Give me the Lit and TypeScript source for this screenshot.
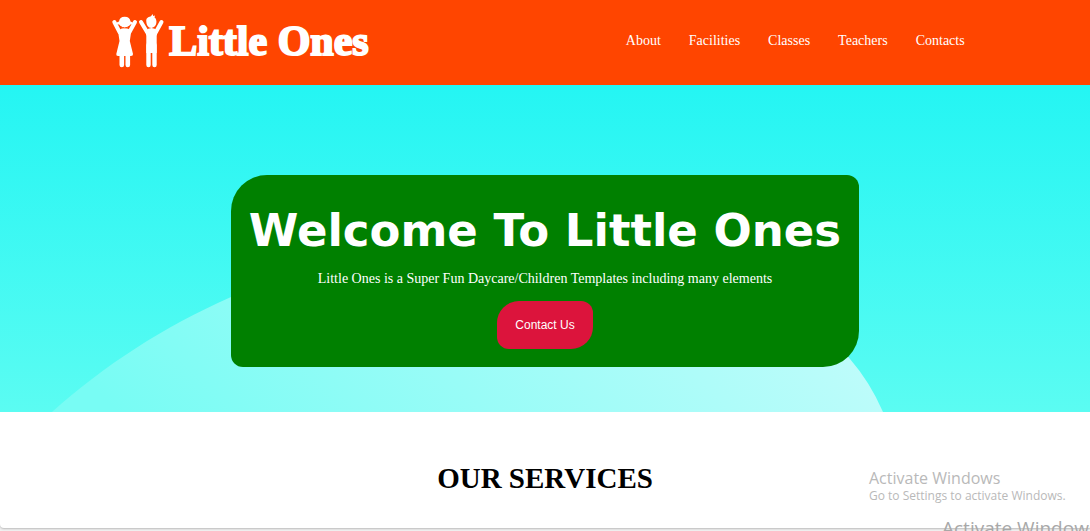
import { LitElement, html, css } from "lit";
import { customElement } from "lit/decorators.js";

const LINKS = ["About", "Facilities", "Classes", "Teachers", "Contacts"];

@customElement("site-logo")
class SiteLogo extends LitElement {
  static styles = css`
    :host { display: block; }
    .logo { display: flex; align-items: center; gap: 4px; color: #fff; text-decoration: none; }
    .kids { display: block; width: 54px; height: 54px; }
    .name {
      font: bold 42px/54px "Liberation Serif", serif;
      -webkit-text-stroke: 2px #fff;
      white-space: nowrap;
    }
  `;
  render() {
    return html`
      <a class="logo" href="#">
        <svg class="kids" viewBox="0 0 54 54" fill="none" stroke="#fff" stroke-linecap="round" stroke-linejoin="round" aria-hidden="true">
          <g stroke-width="4">
            <path d="M3.300 8L8.500 18M24 8L18.500 18" />
            <path d="M30 8L36 18M50.500 8L45 18" />
            <path d="M10.800 38V51M16.800 38V51" stroke-width="4.600" />
            <path d="M37.500 31V51M43.500 31V51" stroke-width="4.400" />
          </g>
          <g fill="#fff" stroke="none">
            <path d="M7 17Q10 14 13.500 14Q17.500 14 20.300 17L18.800 27L22 40Q22.200 42 20 42H7Q5 42 5.300 40L8.500 27Z" />
            <path d="M34.300 17Q37.300 14 40.500 14Q43.800 14 46.800 17L45.700 22V39H35.300V22Z" />
            <path d="M8 7.500Q8.500 3 13.700 2.800Q19 3 19.500 7.500L21.700 8.500Q22 11 19.300 10.500Q17 14 13.700 14Q10.500 14 8.200 10.500Q5.300 11 5.700 8.500Z" />
            <path d="M35.300 7.500C35 4 37 3 39.500 2.500L42 0L42 2L44 1.500L43.500 3.500C46.500 5 46.500 13 40.500 14C37 14 35.500 11 35.300 7.500Z" />
          </g>
          <path d="M9.500 12.500Q13.700 15.500 18 12.500" stroke="#ff4500" stroke-width="1" />
        </svg>
        <span class="name">Little Ones</span>
      </a>
    `;
  }
}

@customElement("site-hero")
class SiteHero extends LitElement {
  static styles = css`
    :host { display: block; }
    .hero { display: grid; background: linear-gradient(#24f5f3, #5bfcf2); }
    .hill, .content { grid-area: 1 / 1; }
    .hill { width: 100%; height: 100%; min-height: 0; contain: size; }
    .content { display: flex; justify-content: center; padding: 90px 16px 45px; z-index: 1; }
    .card {
      display: flex; flex-direction: column; align-items: center;
      padding: 28px 18px 18px;
      border-radius: 36px 12px;
      background: #008000; color: #fff; text-align: center;
    }
    .title { margin: 0; font: bold 45px/56px Verdana, "DejaVu Sans", sans-serif; }
    .lead { margin: 10px 0 12px; font: 14px/20px "Liberation Serif", serif; }
    .cta {
      padding: 17px 18px; border: 0; border-radius: 22px 12px;
      background: #dc143c; color: #fff;
      font: 12px/14px "Liberation Sans", sans-serif; cursor: pointer;
    }
  `;
  render() {
    return html`
      <section class="hero">
        <svg class="hill" viewBox="0 0 1090 327" preserveAspectRatio="none" aria-hidden="true">
          <defs>
            <linearGradient id="haze" x1="0" y1="0.600" x2="1" y2="0.400">
              <stop offset="0" stop-color="#78fcf4" />
              <stop offset="1" stop-color="#c4fcfb" />
            </linearGradient>
          </defs>
          <path fill="url(#haze)" d="M52 327C105 280 163 242 231 212C460 110 760 155 850 274Q870 297 883 327Z" />
        </svg>
        <div class="content">
          <div class="card">
            <h1 class="title">Welcome To Little Ones</h1>
            <p class="lead">Little Ones is a Super Fun Daycare/Children Templates including many elements</p>
            <button class="cta" type="button">Contact Us</button>
          </div>
        </div>
      </section>
    `;
  }
}

@customElement("app-root")
class AppRoot extends LitElement {
  static styles = css`
    :host {
      display: block; position: relative; height: 100vh; overflow: hidden;
      background: #f1f1f1; font-family: "Liberation Serif", serif;
    }
    .page { background: #fff; border-radius: 0 0 0 4px; box-shadow: 0 1px 2px #bbb; }
    .bar {
      display: flex; align-items: center; justify-content: space-between;
      padding: 14px 11.500% 17px 10.200%;
      background: #ff4500;
    }
    .nav { display: flex; gap: 28px; }
    .link { color: #fff; font-size: 14px; line-height: 20px; text-decoration: none; }
    .services { padding: 48px 16px 32px; text-align: center; }
    .heading { margin: 0; color: #000; font-size: 29px; line-height: 36px; }
    .notice {
      position: absolute; top: 468px; left: 869px;
      color: #b9b9b9; font-family: "Segoe UI", "Open Sans", sans-serif; white-space: nowrap;
    }
    .large { top: 514px; left: 942px; font-size: 19px; line-height: 28px; color: #a8a8a8; }
    .strong { font-size: 16px; line-height: 20px; }
    .small { font-size: 12px; line-height: 16px; }
  `;
  render() {
    return html`
      <div class="page">
        <header class="bar">
          <site-logo></site-logo>
          <nav class="nav">${LINKS.map((l) => html`<a class="link" href="#${l.toLowerCase()}">${l}</a>`)}</nav>
        </header>
        <site-hero></site-hero>
        <section class="services"><h2 class="heading">OUR SERVICES</h2></section>
      </div>
      <div class="notice">
        <div class="strong">Activate Windows</div>
        <div class="small">Go to Settings to activate Windows.</div>
      </div>
      <div class="notice large">Activate Windows</div>
    `;
  }
}
